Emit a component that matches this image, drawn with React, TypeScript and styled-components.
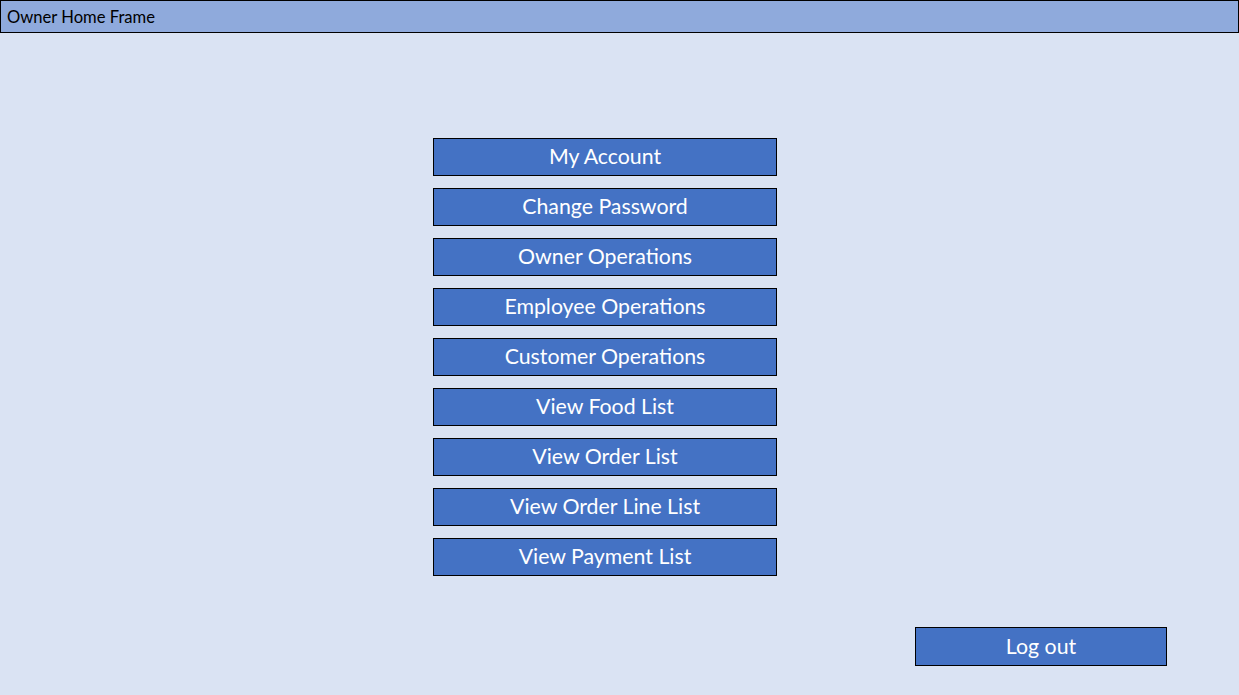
import styled, { createGlobalStyle } from 'styled-components';

const GlobalStyle = createGlobalStyle`
  html, body {
    margin: 0;
    padding: 0;
    background: #dae3f3;
  }
  body {
    font-family: Lato, "Open Sans", sans-serif;
  }
`;

const Frame = styled.div`
  width: 1239px;
  height: 695px;
  background: #dae3f3;
  display: flex;
  flex-direction: column;
  overflow: hidden;
`;

const TitleBar = styled.header`
  height: 33px;
  box-sizing: border-box;
  background: #8faadc;
  border: 1px solid #000;
  display: flex;
  align-items: center;
  padding-left: 6px;
  font-size: 16.6px;
  color: #000;
`;

const Menu = styled.nav`
  margin-top: 105px;
  padding-left: 433px;
  display: flex;
  flex-direction: column;
  gap: 12px;
`;

const Button = styled.button<{ $width: number; $height?: number }>`
  width: ${(p) => p.$width}px;
  height: ${(p) => p.$height ?? 38}px;
  box-sizing: border-box;
  background: #4472c4;
  border: 1px solid #000;
  color: #fff;
  font-family: Lato, "Open Sans", sans-serif;
  font-size: 21.3px;
  padding: 0 0 2px;
  display: flex;
  align-items: center;
  justify-content: center;
  cursor: pointer;
`;

const Footer = styled.div`
  margin-top: 51px;
  padding-left: 915px;
`;

const items = [
  'My Account',
  'Change Password',
  'Owner Operations',
  'Employee Operations',
  'Customer Operations',
  'View Food List',
  'View Order List',
  'View Order Line List',
  'View Payment List',
];

export default function App() {
  return (
    <>
      <GlobalStyle />
      <Frame>
        <TitleBar>Owner Home Frame</TitleBar>
        <Menu>
          {items.map((label) => (
            <Button key={label} $width={344}>
              {label}
            </Button>
          ))}
        </Menu>
        <Footer>
          <Button $width={252} $height={39}>
            Log out
          </Button>
        </Footer>
      </Frame>
    </>
  );
}
